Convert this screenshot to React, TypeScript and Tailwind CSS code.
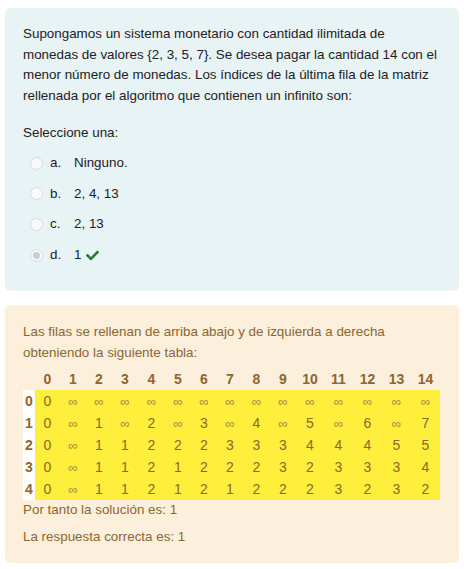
const rows: string[][] = [
  ["0", "∞", "∞", "∞", "∞", "∞", "∞", "∞", "∞", "∞", "∞", "∞", "∞", "∞", "∞"],
  ["0", "∞", "1", "∞", "2", "∞", "3", "∞", "4", "∞", "5", "∞", "6", "∞", "7"],
  ["0", "∞", "1", "1", "2", "2", "2", "3", "3", "3", "4", "4", "4", "5", "5"],
  ["0", "∞", "1", "1", "2", "1", "2", "2", "2", "3", "2", "3", "3", "3", "4"],
  ["0", "∞", "1", "1", "2", "1", "2", "1", "2", "2", "2", "3", "2", "3", "2"],
];

const colWidths = [25, 26, 26, 26, 27, 26, 26, 26, 27, 26, 28, 29, 29, 29, 29];

const question =
  "Supongamos un sistema monetario con cantidad ilimitada de monedas de valores {2, 3, 5, 7}. Se desea pagar la cantidad 14 con el menor número de monedas. Los índices de la última fila de la matriz rellenada por el algoritmo que contienen un infinito son:";

const options = [
  { key: "a.", text: "Ninguno." },
  { key: "b.", text: "2, 4, 13" },
  { key: "c.", text: "2, 13" },
  { key: "d.", text: "1", checked: true },
];

function Radio({ checked }: { checked?: boolean }) {
  return (
    <span className="flex h-[13px] w-[13px] shrink-0 items-center justify-center rounded-full border border-[#d6dadd] bg-[#f8f9fa]">
      {checked && <span className="h-[7px] w-[7px] rounded-full bg-[#c9cdd1]" />}
    </span>
  );
}

export default function App() {
  return (
    <div
      className="min-h-[569px] bg-white px-[5px] pt-2 text-[13.4px] leading-[20.6px]"
      style={{ fontFamily: '"Liberation Sans", Arial, sans-serif' }}
    >
      <div className="rounded-[6px] bg-[#e7f3f5] px-[18px] pt-4 pb-[21px] text-[#1d2125]">
        <p>{question}</p>
        <p className="mt-[17px] mb-[4px]">Seleccione una:</p>
        <div>
          {options.map((o) => (
            <div key={o.key} className="flex items-center py-[5px] pl-[7px]">
              <Radio checked={o.checked} />
              <span className="ml-[7px] w-[24px]">{o.key}</span>
              <span>{o.text}</span>
              {o.checked && (
                <svg viewBox="0 0 512 512" className="ml-[5px] h-[13px] w-[13px] fill-[#357a32]">
                  <path d="M173.898 439.404l-166.4-166.4c-9.997-9.997-9.997-26.206 0-36.204l36.203-36.204c9.997-9.998 26.207-9.998 36.204 0L192 312.69 432.095 72.596c9.997-9.997 26.207-9.997 36.204 0l36.203 36.204c9.997 9.997 9.997 26.206 0 36.204l-294.4 294.401c-9.998 9.997-26.207 9.997-36.204-.001z" />
                </svg>
              )}
            </div>
          ))}
        </div>
      </div>

      <div className="mt-[14px] rounded-[6px] bg-[#fcefdc] px-[18px] pt-[17px] pb-[16px] text-[#8e662e]">
        <p>
          Las filas se rellenan de arriba abajo y de izquierda a derecha obteniendo la siguiente tabla:
        </p>
        <table className="mt-[4px] border-collapse text-[14px] leading-[22px]">
          <thead>
            <tr className="h-[22px]">
              <th className="w-[12px] p-0" />
              {colWidths.map((w, i) => (
                <th key={i} className="p-0 text-center font-bold" style={{ width: w }}>
                  {i}
                </th>
              ))}
            </tr>
          </thead>
          <tbody>
            {rows.map((r, ri) => (
              <tr key={ri} className="h-[22px]">
                <th className="h-[22px] bg-white p-0 text-center font-bold">{ri}</th>
                {r.map((v, ci) => (
                  <td key={ci} className="h-[22px] bg-[#fdef3b] p-0 text-center">
                    {v === "∞" ? (
                      <span className="text-[13px] leading-none text-[#a8844c]">∞</span>
                    ) : (
                      v
                    )}
                  </td>
                ))}
              </tr>
            ))}
          </tbody>
        </table>
        <p>Por tanto la solución es: 1</p>
        <p className="mt-[6.5px]">La respuesta correcta es: 1</p>
      </div>
    </div>
  );
}
